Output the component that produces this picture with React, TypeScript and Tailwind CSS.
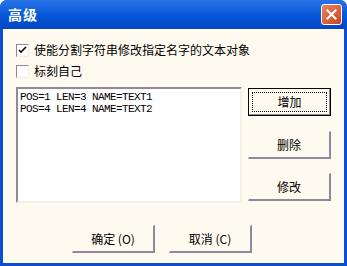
import React from 'react';

const cjk = { fontFamily: '"SimSun", "Noto Sans CJK SC", sans-serif' };

const Check: React.FC<{ checked?: boolean }> = ({ checked }) => (
  <div className="w-[13px] h-[13px] border-t border-l border-[#8d8a99] border-r border-b border-r-[#f0efe9] border-b-[#f0efe9] bg-white flex items-center justify-center">
    {checked && (
      <svg width="9" height="9" viewBox="0 0 9 9">
        <path d="M1 4 L3 6 L8 1" stroke="#000" strokeWidth="1.6" fill="none" />
      </svg>
    )}
  </div>
);

const Btn: React.FC<{ label: string; def?: boolean; className?: string }> = ({ label, def, className = '' }) => (
  <div
    className={`w-[83px] h-[28px] bg-[#fefaf0] flex items-center justify-center text-[12px] text-black ${className} ${
      def
        ? 'border border-black shadow-[inset_-1px_-1px_0_#8d8a99]'
        : 'border-t border-l border-[#fefaf0] border-r-2 border-b-2 border-r-[#8d8a99] border-b-[#8d8a99]'
    }`}
    style={cjk}
  >
    {def ? (
      <div className="w-[75px] h-[20px] border border-dotted border-black flex items-center justify-center">{label}</div>
    ) : (
      label
    )}
  </div>
);

export default function App() {
  return (
    <div className="w-[347px] h-[266px] bg-[#0a4fd1] rounded-t-[7px] flex flex-col overflow-hidden">
      {/* Title bar */}
      <div className="h-[29px] flex items-center justify-between pl-[8px] pr-[5px] bg-gradient-to-b from-[#2a74e8] via-[#0558d8] to-[#0446c4]">
        <span className="text-white font-bold text-[14px] tracking-[1px]" style={cjk}>高级</span>
        <div className="w-[21px] h-[21px] rounded-[3px] border border-white bg-gradient-to-br from-[#e8845e] to-[#c9431d] flex items-center justify-center">
          <svg width="11" height="11" viewBox="0 0 11 11">
            <path d="M1.5 1.5 L9.5 9.5 M9.5 1.5 L1.5 9.5" stroke="#fff" strokeWidth="2" strokeLinecap="square" />
          </svg>
        </div>
      </div>

      {/* Client area */}
      <div className="flex-1 mx-[3px] mb-[3px] bg-[#fefaf0] flex flex-col pt-[14px] pl-[13px]">
        <div className="flex items-center gap-[5px] h-[14px] text-[12px] text-black" style={cjk}>
          <Check checked />
          <span>使能分割字符串修改指定名字的文本对象</span>
        </div>
        <div className="flex items-center gap-[5px] h-[14px] mt-[7px] text-[12px] text-black" style={cjk}>
          <Check />
          <span>标刻自己</span>
        </div>

        <div className="flex mt-[9px]">
          <div className="w-[226px] h-[116px] bg-white border-t-2 border-l-2 border-[#8d8a99] border-r-2 border-b-2 border-r-[#f3f0e6] border-b-[#f3f0e6] pl-[2px] pt-[2px] text-[11px] leading-[12px] tracking-[-0.6px] text-black" style={{ fontFamily: '"Liberation Mono", monospace' }}>
            <div>POS=1 LEN=3 NAME=TEXT1</div>
            <div>POS=4 LEN=4 NAME=TEXT2</div>
          </div>
          <div className="flex flex-col ml-[6px] mt-[1px]">
            <Btn label="增加" def />
            <Btn label="删除" className="mt-[15px]" />
            <Btn label="修改" className="mt-[14px]" />
          </div>
        </div>

        <div className="flex mt-[22px] ml-[56px] gap-[14px]">
          <Btn label="确定 (O)" />
          <Btn label="取消 (C)" />
        </div>
      </div>
    </div>
  );
}
